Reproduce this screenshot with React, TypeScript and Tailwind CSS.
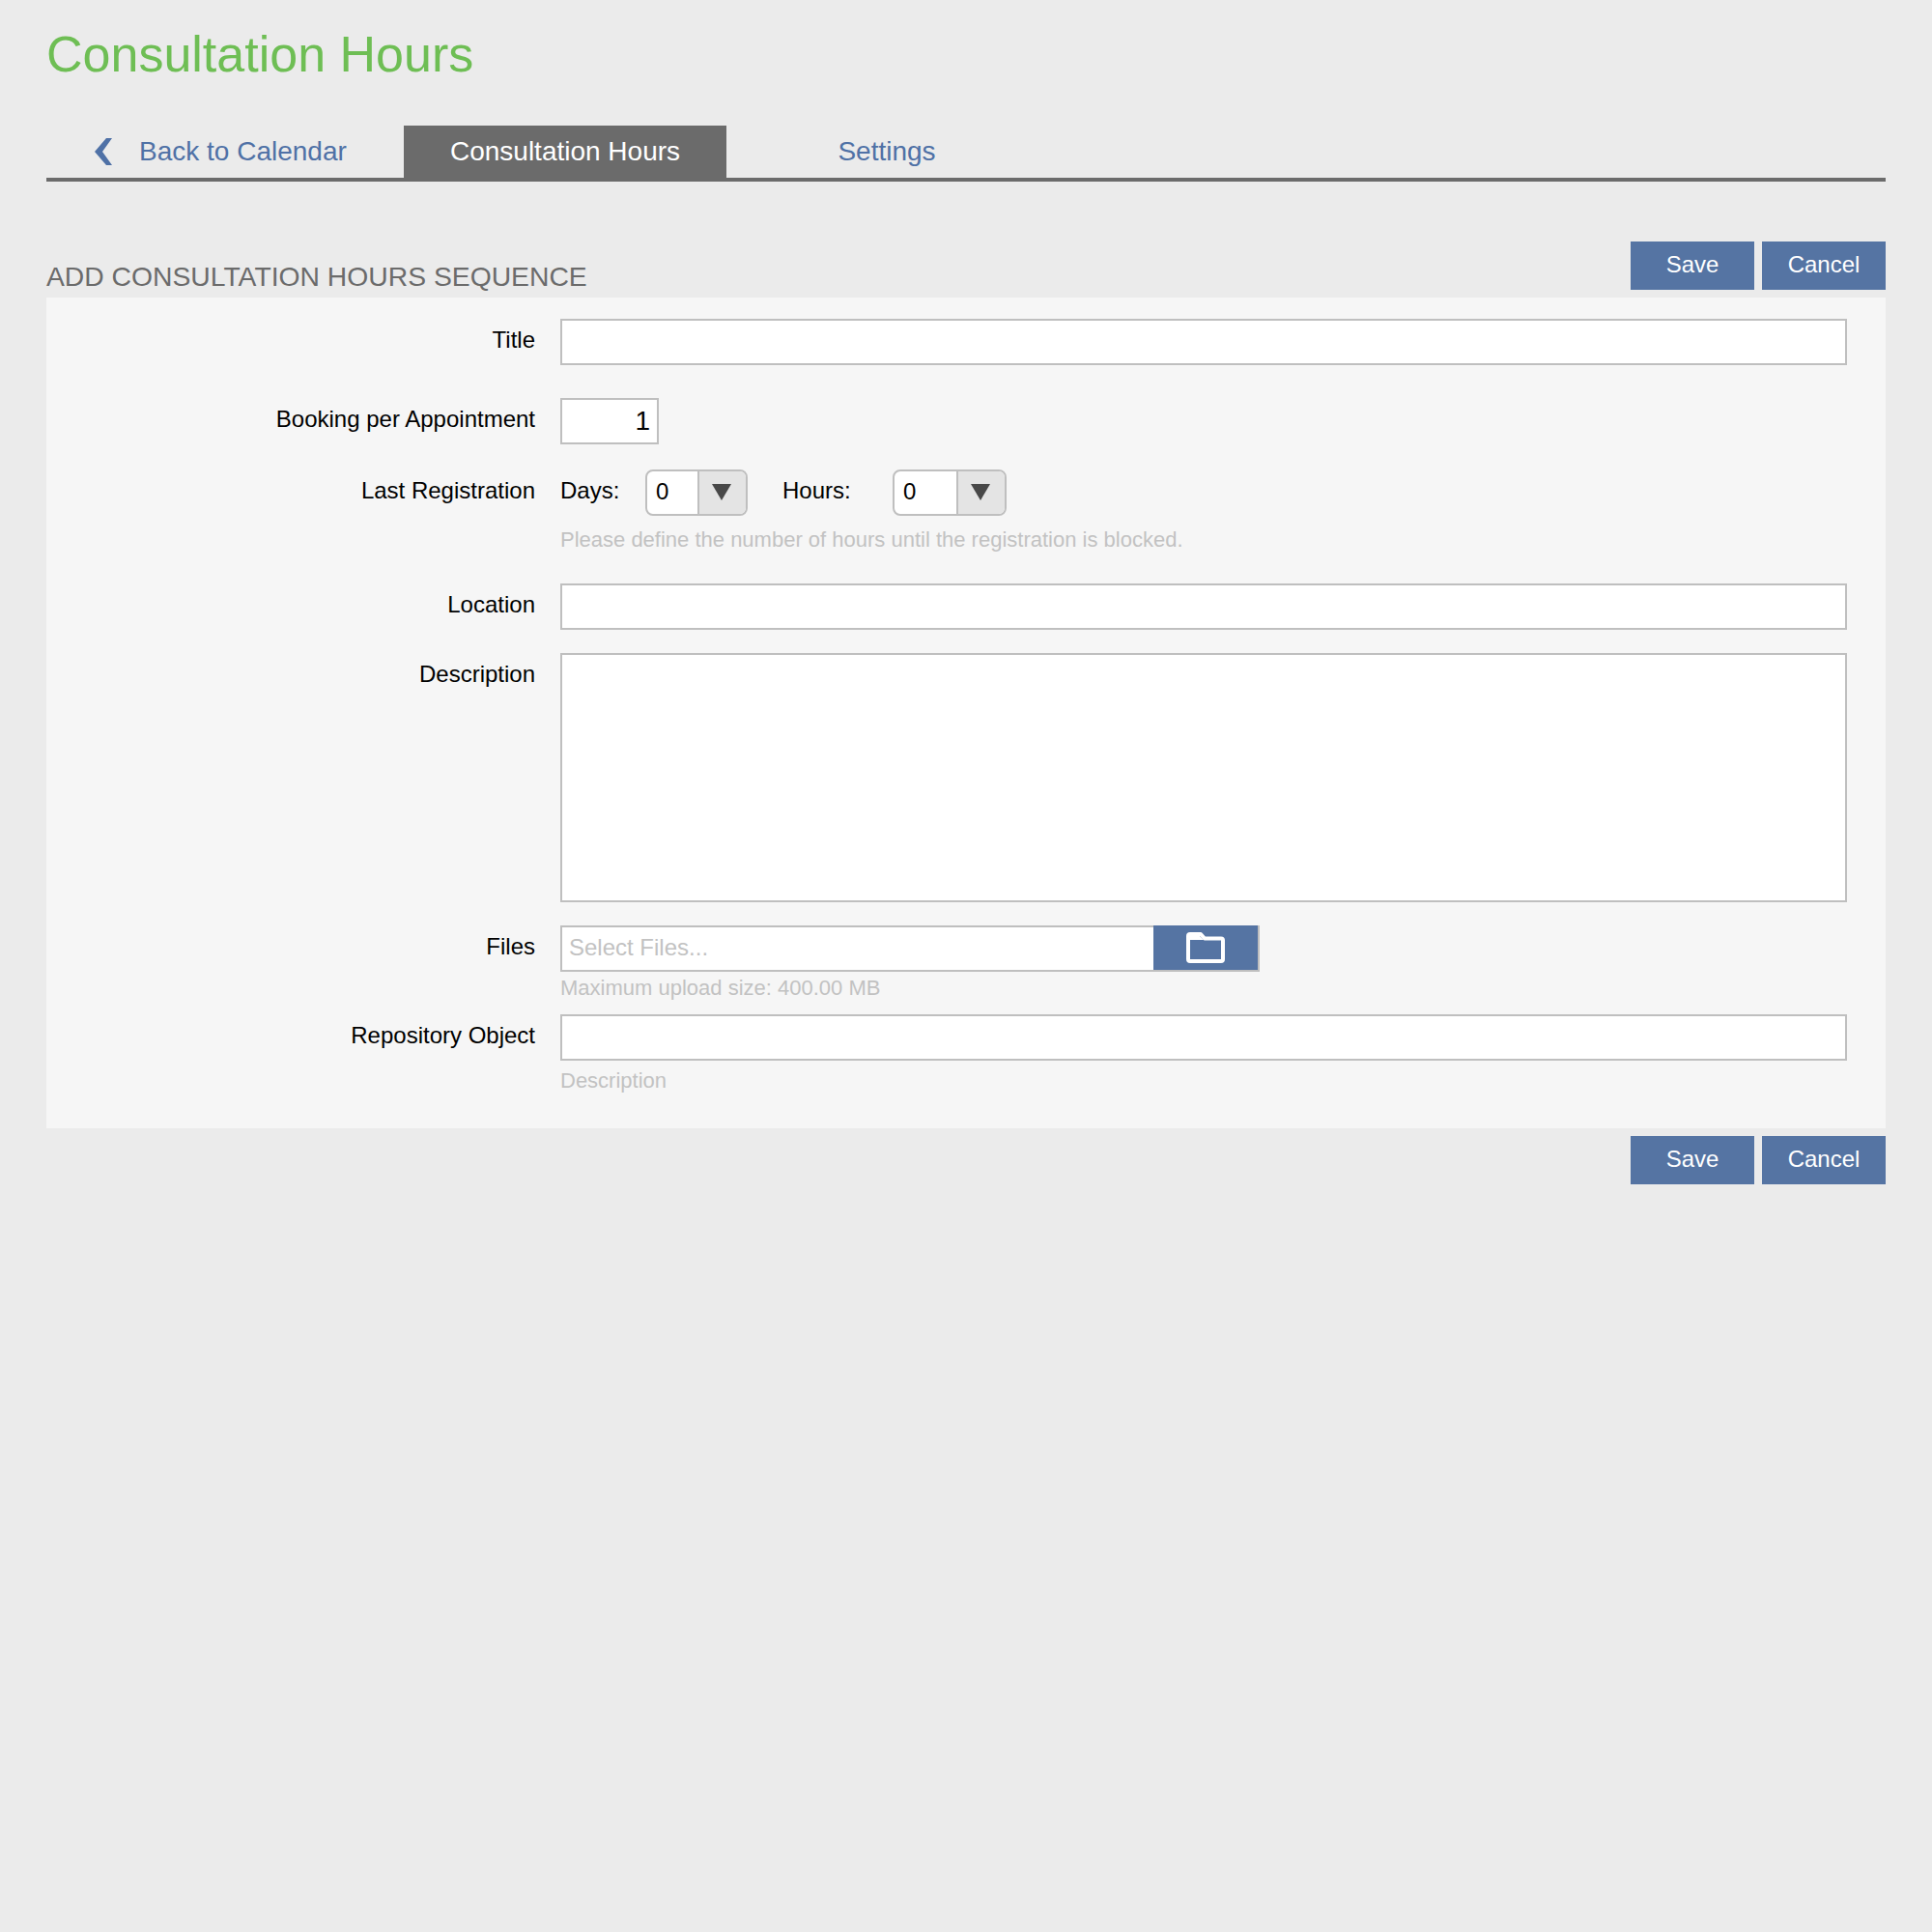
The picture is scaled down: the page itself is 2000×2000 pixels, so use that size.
import { ReactNode } from "react";

const font = "font-['Liberation_Sans',Arial,sans-serif]";

const FormButtons = () => (
  <div className="flex gap-2">
    <button className="h-[50px] w-[128px] bg-[#5574a3] pb-[2px] text-[24px] text-white">Save</button>
    <button className="h-[50px] w-[128px] bg-[#5574a3] pb-[2px] text-[24px] text-white">Cancel</button>
  </div>
);

const Row = ({ label, className, children }: { label: string; className?: string; children: ReactNode }) => (
  <div className={`flex ${className ?? ""}`}>
    <label className="w-[506px] shrink-0 pt-[6px] text-right text-[24px] leading-[32px] text-black">{label}</label>
    <div className="ml-[26px] flex-1">{children}</div>
  </div>
);

const Hint = ({ children, className }: { children: ReactNode; className?: string }) => (
  <p className={`text-[22px] leading-[28px] text-[#c2c2c2] ${className ?? ""}`}>{children}</p>
);

const SelectBox = ({ width }: { width: string }) => (
  <div className={`flex h-[48px] overflow-hidden rounded-[8px] border-2 border-[#bfbfbf] bg-white ${width}`}>
    <span className="flex-1 pl-[9px] text-[24px] leading-[42px] text-black">0</span>
    <span className="flex w-[50px] items-center justify-center border-l-2 border-[#bfbfbf] bg-[#e4e4e4] pb-[2px] pr-[2px]">
      <svg width="20" height="17" viewBox="0 0 20 17">
        <path d="M0 0H20L10 17Z" fill="#484848" />
      </svg>
    </span>
  </div>
);

const textInput = "block h-[48px] w-full border-2 border-[#bfbfbf] bg-white";

export default function App() {
  return (
    <div className={`min-h-screen bg-[#ebebeb] px-[48px] ${font}`}>
      <h1 className="pt-[24px] text-[52px] leading-[64px] text-[#6ebe54]">Consultation Hours</h1>

      <nav className="mt-[42px] flex h-[58px] border-b-4 border-[#6b6b6b] text-[28px]">
        <a className="flex w-[370px] items-center text-[#4f71a6]">
          <svg className="ml-[50px]" width="18" height="28" viewBox="0 0 18 28">
            <path d="M12 0H18L8 14L18 28H12L0 14Z" fill="#4f71a6" />
          </svg>
          <span className="ml-[28px]">Back to Calendar</span>
        </a>
        <a className="-mb-[4px] flex h-[58px] w-[334px] items-center justify-center bg-[#6b6b6b] pb-[4px] text-white">
          Consultation Hours
        </a>
        <a className="flex w-[332px] items-center justify-center text-[#4f71a6]">Settings</a>
      </nav>

      <div className="mt-[62px] flex h-[58px] items-start justify-between">
        <h2 className="pt-[19px] text-[28.300px] leading-[34px] text-[#6b6b6b]">ADD CONSULTATION HOURS SEQUENCE</h2>
        <FormButtons />
      </div>

      <form className="h-[860px] bg-[#f6f6f6] pr-[40px] pt-[22px]">
        <Row label="Title">
          <input className={textInput} />
        </Row>

        <Row label="Booking per Appointment" className="mt-[34px]">
          <input
            className="block h-[48px] w-[102px] border-2 border-[#bfbfbf] bg-white pr-[7px] text-right text-[28px] text-black"
            defaultValue="1"
          />
        </Row>

        <Row label="Last Registration" className="mt-[26px]">
          <div className="flex items-start">
            <span className="w-[88px] pt-[6px] text-[24px] leading-[32px] text-black">Days:</span>
            <SelectBox width="w-[106px]" />
            <span className="ml-[36px] w-[114px] pt-[6px] text-[24px] leading-[32px] text-black">Hours:</span>
            <SelectBox width="w-[118px]" />
          </div>
          <Hint className="mt-[11px]">Please define the number of hours until the registration is blocked.</Hint>
        </Row>

        <Row label="Location" className="mt-[31px]">
          <input className={textInput} />
        </Row>

        <Row label="Description" className="mt-[24px]">
          <textarea className="block h-[258px] w-full resize-none border-2 border-[#bfbfbf] bg-white" />
        </Row>

        <Row label="Files" className="mt-[24px]">
          <div className="flex h-[48px] w-[724px] border-2 border-[#bfbfbf] bg-white">
            <span className="flex-1 pl-[7px] text-[24px] leading-[42px] text-[#c2c2c2]">Select Files...</span>
            <span className="-mt-[2px] flex h-[46px] w-[108px] items-center justify-center bg-[#5574a3]">
              <svg width="40" height="32" viewBox="0 0 40 32" fill="none">
                <path
                  d="M4 2H15L19 6.500H36C37.100 6.500 38 7.400 38 8.500V28C38 29.100 37.100 30 36 30H4C2.900 30 2 29.100 2 28V4C2 2.900 2.900 2 4 2Z"
                  stroke="white"
                  strokeWidth="4"
                  strokeLinejoin="round"
                />
                <path d="M4 4H14L18 8H4Z" fill="white" />
              </svg>
            </span>
          </div>
          <Hint className="mt-[3px]">Maximum upload size: 400.00 MB</Hint>
        </Row>

        <Row label="Repository Object" className="mt-[13px]">
          <input className={textInput} />
          <Hint className="mt-[7px]">Description</Hint>
        </Row>
      </form>

      <div className="mt-[8px] flex justify-end">
        <FormButtons />
      </div>
    </div>
  );
}
